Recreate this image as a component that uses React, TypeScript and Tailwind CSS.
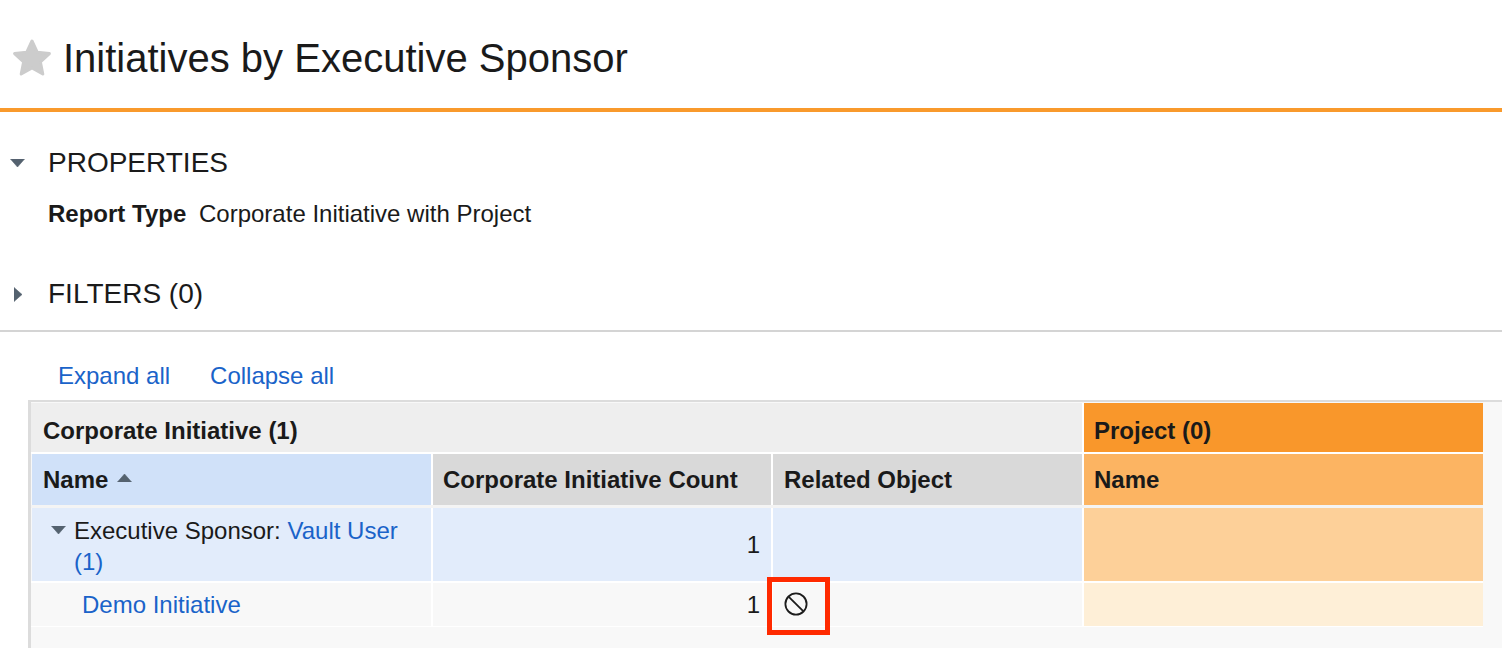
import React from 'react';

const Triangle = ({ dir, className }: { dir: 'down' | 'right' | 'up'; className?: string }) => {
  const points = dir === 'down' ? '0,0 14,0 7,8' : dir === 'up' ? '0,8 14,8 7,0' : '0,0 8,7 0,14';
  const box = dir === 'right' ? '0 0 8 14' : '0 0 14 8';
  return (
    <svg viewBox={box} className={className}>
      <polygon points={points} fill="#54626f" stroke="#54626f" strokeWidth="0.6" strokeLinejoin="round" />
    </svg>
  );
};

const Star = () => (
  <svg viewBox="0 0 40 38" className="w-[40px] h-[38px]">
    <path
      d="M20 2 L25.2 13.2 L37.4 14.6 L28.4 23 L30.8 35 L20 29 L9.2 35 L11.6 23 L2.6 14.6 L14.8 13.2 Z"
      fill="#cccccc"
      stroke="#cccccc"
      strokeWidth="3"
      strokeLinejoin="round"
    />
  </svg>
);

const BlockedIcon = () => (
  <svg viewBox="0 0 24 24" className="w-[24px] h-[24px] mb-[2px]" fill="none" stroke="#1c1c1c" strokeWidth="1.8">
    <circle cx="12" cy="12" r="10.6" />
    <path d="M4.8 4.8 L19.2 19.2" />
  </svg>
);

const App: React.FC = () => {
  return (
    <div className="w-[1502px] h-[648px] overflow-hidden bg-white text-[#1a1a1a] font-['Liberation_Sans',Arial,sans-serif]">
      <div className="flex items-center h-[112px] border-b-[4px] border-[#f99a2c] pl-[12px] pt-[8px]">
        <Star />
        <h1 className="ml-[11px] text-[40px] leading-[44px] font-normal">Initiatives by Executive Sponsor</h1>
      </div>

      <div className="flex items-center h-[32px] mt-[35px]">
        <div className="w-[48px] pl-[10px]">
          <Triangle dir="down" className="w-[15px] h-[8px]" />
        </div>
        <span className="text-[28px]">PROPERTIES</span>
      </div>
      <div className="flex items-center h-[28px] mt-[21px] pl-[48px] text-[24px]">
        <span className="font-bold w-[151px]">Report Type</span>
        <span>Corporate Initiative with Project</span>
      </div>

      <div className="flex items-center h-[32px] mt-[50px]">
        <div className="w-[48px] pl-[14px]">
          <Triangle dir="right" className="w-[8px] h-[15px]" />
        </div>
        <span className="text-[28px]">FILTERS (0)</span>
      </div>
      <div className="h-[2px] bg-[#d4d4d4] mt-[20px]" />

      <div className="flex gap-[40px] pl-[58px] mt-[30px] h-[28px] items-center text-[24px] text-[#1a63c9]">
        <a>Expand all</a>
        <a>Collapse all</a>
      </div>

      <div className="relative ml-[28px] mt-[10px] h-[260px] border-l-[3px] border-t-[2px] border-[#dcdcdc] bg-[#f8f8f8] text-[24px]">
        <div className="grid grid-cols-[400px_2px_338px_2px_309px_2px_399px] w-[1452px] pt-[1px]">
          {/* top header */}
          <div className="col-span-5 h-[49px] bg-[#eeeeee] flex items-center pl-[12px] pt-[6px] font-bold">
            Corporate Initiative (1)
          </div>
          <div className="bg-white" />
          <div className="h-[49px] bg-[#f9972b] flex items-center pl-[10px] pt-[6px] font-bold">Project (0)</div>

          {/* second header */}
          <div className="col-span-7 h-[2px] bg-white" />
          <div className="h-[51px] ml-[1px] bg-[#d0e1f9] flex items-center pl-[11px] font-bold">
            Name
            <Triangle dir="up" className="w-[15px] h-[8px] ml-[9px] mb-[3px]" />
          </div>
          <div className="bg-white" />
          <div className="bg-[#d9d9d9] flex items-center pl-[10px] font-bold">Corporate Initiative Count</div>
          <div className="bg-white" />
          <div className="bg-[#d9d9d9] flex items-center pl-[11px] font-bold">Related Object</div>
          <div className="bg-white" />
          <div className="bg-[#fcb462] flex items-center pl-[10px] font-bold">Name</div>

          {/* group row */}
          <div className="col-span-7 h-[3px] bg-[#f4f4f4]" />
          <div className="h-[73px] ml-[1px] bg-[#e2ecfb] pl-[42px] pr-[20px] pt-[7px] leading-[31px] relative">
            <Triangle dir="down" className="absolute left-[19px] top-[18px] w-[15px] h-[8px]" />
            Executive Sponsor: <a className="text-[#1a63c9]">Vault User (1)</a>
          </div>
          <div className="bg-white" />
          <div className="bg-[#e2ecfb] flex items-center justify-end pr-[11px]">1</div>
          <div className="bg-white" />
          <div className="bg-[#e2ecfb]" />
          <div className="bg-white" />
          <div className="bg-[#fdd099]" />

          {/* detail row */}
          <div className="col-span-7 h-[2px] bg-white" />
          <div className="h-[43px] ml-[1px] bg-[#f8f8f8] flex items-center pl-[50px] text-[#1a63c9]">Demo Initiative</div>
          <div className="bg-white" />
          <div className="bg-[#f8f8f8] flex items-center justify-end pr-[11px]">1</div>
          <div className="bg-white" />
          <div className="bg-[#f8f8f8] flex items-center pl-[11px]">
            <BlockedIcon />
          </div>
          <div className="bg-white" />
          <div className="bg-[#feefd7]" />
          <div className="col-span-7 h-[1px] bg-white" />
        </div>

        {/* annotation box */}
        <div className="absolute left-[736px] top-[175px] w-[63px] h-[58px] border-[5px] border-[#ff2a00]" />
      </div>
    </div>
  );
};

export default App;
